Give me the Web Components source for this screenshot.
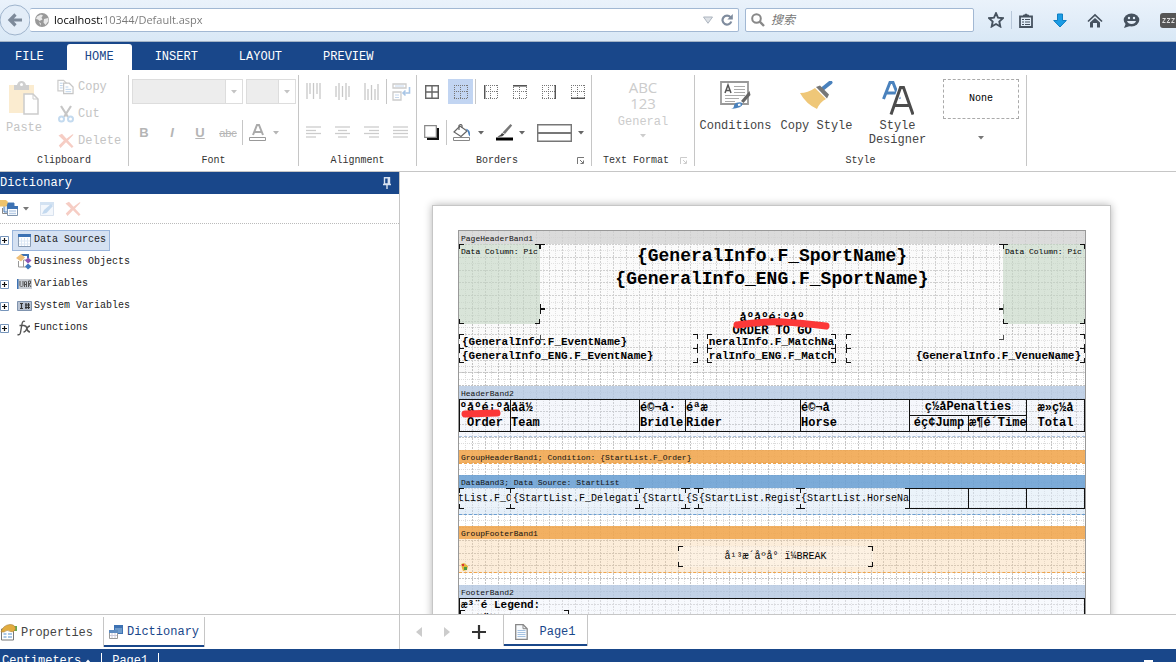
<!DOCTYPE html>
<html lang="en">
<head>
<meta charset="utf-8">
<title>Report Designer</title>
<style>
    html, body { margin: 0; height: 100%; }
    body {
        --blue: #19478a;
        --line: #c6c6c6;
        --ink: #444;
        --off: #c4c4c4;
        font-family: "Liberation Mono", monospace;
        font-size: 12px;
        line-height: 14px;
        color: var(--ink);
        background: #fff;
        overflow: hidden;
    }
</style>
</head>
<body>
<report-designer></report-designer>

<script>
const CONTROLS = `
    * { box-sizing: border-box; }
    button, input, select {
        font: inherit; color: inherit; background: none;
        border: 0; padding: 0; margin: 0; border-radius: 0; min-width: 0;
    }
    button { display: inline-flex; align-items: center; justify-content: center; flex: none; }
`;

function define(name, html, setup) {
    customElements.define(name, class extends HTMLElement {
        constructor() {
            super();
            this.shadow = this.attachShadow({ mode: 'open' });
        }

        connectedCallback() {
            const markup = typeof html === 'function' ? html(this) : html;
            this.shadow.innerHTML = `<style>${CONTROLS}</style>${markup}`;
            if (setup) setup(this);
        }
    });
}

// name: [width, height, svg content]
const bars = (list, vertical) => list.map(([p, a, b]) => vertical
    ? `<path d="M${p} ${a}V${b}"/>` : `<path d="M${a} ${p}H${b}"/>`).join('');
const dots = '<g stroke="#777" stroke-dasharray="1 1"><path d="M0 .5H14M0 6.5H14M0 13.5H14M.5 0V14M6.5 0V14M13.5 0V14"/></g>';
const vbars = list => `<g stroke="#c8c8c8" stroke-width="1.3">${bars(list, true)}</g>`;
const hbars = list => `<g stroke="#ccc" stroke-width="1.3">${bars(list, false)}</g>`;

const ICONS = {
    back: [32, 32, '<circle cx="15" cy="16" r="15" fill="#e3edf8" stroke="#9fb4cc"/><path d="M22 16H10M15.500 10.500L10 16l5.500 5.500" fill="none" stroke="#7d8a9a" stroke-width="3.200"/>'],
    globe: [14, 14, '<circle cx="7" cy="7" r="7" fill="#999"/><path d="M2 3.500L6 1.500l2 1-1.500 2 1 2L4.500 8 3 6.500l-2-.5zM9 6l4-1 .5 3-3 4-2-2.500zM4 9l2 1.500-.5 2z" fill="#e9e9e9"/>'],
    drop: [10, 8, '<path d="M.5 1h9L5 7.300z" fill="#dde1e6" stroke="#adb5bf"/>'],
    reload: [12, 12, '<path d="M9.500 3.200A4.500 4.500 0 1 0 10.300 7.500" fill="none" stroke="#7f8c9e" stroke-width="2.200"/><path d="M11.800 0v5.500H6.300z" fill="#7f8c9e"/>'],
    search: [14, 14, '<circle cx="5.500" cy="5.500" r="4.300" fill="none" stroke="#888" stroke-width="2"/><path d="M8.700 8.700L13 13" stroke="#888" stroke-width="2.400"/>'],
    star: [16, 16, '<path d="M8 1.200l2 4.500 5 .5-3.700 3.300 1 5L8 12l-4.300 2.500 1-5L1 6.200l5-.5z" fill="none" stroke="#46525f" stroke-width="1.900"/>'],
    list: [14, 15, '<path d="M1 3.500h12v10.500H1z" fill="none" stroke="#46525f" stroke-width="1.800"/><path d="M4.500 3V2h1.500L7 .8 8 2h1.500v1" fill="#46525f" stroke="#46525f"/><path d="M3 6.500h2M6 6.500h5M3 9h2M6 9h5M3 11.500h2M6 11.500h5" stroke="#46525f"/>'],
    download: [14, 15, '<path d="M4.500 1h5v6.500H13.300L7 14 .7 7.500h3.800z" fill="#1b9ce5" stroke="#0d7fc3"/>'],
    home: [16, 15, '<path d="M1 8.500L8 2l7 6.500" fill="none" stroke="#46525f" stroke-width="1.700"/><path d="M3 9.500l5-4.600 5 4.600v5H10v-4.500H6v4.500H3z" fill="#46525f"/>'],
    smile: [17, 15, '<ellipse cx="8.500" cy="7" rx="7.800" ry="6.500" fill="#46525f"/><path d="M3 10l-2 5 6-2z" fill="#46525f"/><circle cx="6" cy="5" r="1.200" fill="#e4eef9"/><circle cx="11" cy="5" r="1.200" fill="#e4eef9"/><path d="M4 8h9c-.8 4-8 4-9 0z" fill="#e4eef9"/>'],
    sleep: [16, 15, '<path d="M3 0h13v15H3a3 3 0 0 1-3-3V3a3 3 0 0 1 3-3z" fill="#555"/><path d="M2.500 5.500h3l-3 4h3M7 5.500h3l-3 4h3M11.500 5.500h3l-3 4h3" fill="none" stroke="#ddd"/>'],
    paste: [30, 34, '<path d="M0 4h25v28H0z" fill="#fbecd0"/><path d="M5 4h3q1-4 4.500-4T17 4h3v5H5z" fill="#cfcfcf"/><circle cx="12.500" cy="3.500" r="1.500" fill="#fff"/><path d="M15 13h9l5 5v15H15z" fill="#fff" stroke="#ccc" stroke-width="1.500"/><path d="M24 13v5h5" fill="none" stroke="#ccc"/>'],
    copy: [18, 16, '<path d="M1 1h6l3 3v8H1z" fill="#fff" stroke="#ccc" stroke-width="1.300"/><path d="M7 4h6l4 4v7H7z" fill="#fff" stroke="#c6c6c6" stroke-width="1.300"/><path d="M3 4h3M3 6.500h3M3 9h3M9 8h3M9 10.500h6M9 13h6" stroke="#b9d0ea"/>'],
    cut: [16, 18, '<path d="M3 1l7 11M13 1L6 12" stroke="#c6c6c6" stroke-width="2.200"/><circle cx="3.500" cy="14" r="2.500" fill="none" stroke="#c3daef" stroke-width="2"/><circle cx="12.500" cy="14" r="2.500" fill="none" stroke="#c3daef" stroke-width="2"/>'],
    cross: [16, 16, '<path d="M.5 2.500L4 .8l4.500 5 6-4.500 1 .4L10 7.500l5.500 6L13.800 15 8 9.300 2.500 15 .8 12.500l5-5z" fill="#f6cdc4"/>'],
    fontcolor: [18, 17, '<path d="M4 11L8 1h2l4 10M5.800 8h6.400" fill="none" stroke="#aaa" stroke-width="2"/><path d="M.5 13.500h16v3H.5z" fill="#fff" stroke="#999"/>'],
    caret: [6, 4, '<path d="M0 0h6L3 3.500z" fill="currentColor"/>'],
    vtop: [15, 18, vbars([[1, 0, 16], [4, 0, 11], [7.5, 0, 16], [11, 0, 11], [14, 0, 16]])],
    vmid: [15, 18, vbars([[1, 3, 14], [4, 0, 17], [7.5, 3, 14], [11, 0, 17], [14, 3, 14]])],
    vbot: [15, 18, vbars([[1, 0, 17], [4, 6, 17], [7.5, 2, 17], [11, 6, 17], [14, 1, 17]])],
    wrap: [19, 18, '<path d="M1 1h13v4H1zM1 9h8v8H1z" fill="#fff" stroke="#ccc" stroke-width="1.300"/><path d="M3 3h9M3 12h4M3 14.500h4" stroke="#c6d8ee"/><path d="M17.500 4v6H11M13.500 7.500L11 10l2.500 2.500" fill="none" stroke="#a9c6e6" stroke-width="1.600"/>'],
    left: [15, 14, hbars([[1, 0, 15], [4.5, 0, 10], [7.5, 0, 15], [11, 0, 10]])],
    center: [15, 14, hbars([[1, 0, 15], [4.5, 3, 12], [7.5, 0, 15], [11, 3, 12]])],
    right: [15, 14, hbars([[1, 0, 15], [4.5, 5, 15], [7.5, 0, 15], [11, 5, 15]])],
    justify: [15, 14, hbars([[1, 0, 15], [4.5, 0, 15], [7.5, 0, 15], [11, 0, 15]])],
    ball: [14, 14, '<path d="M.7.7h12.600v12.600H.7zM7 1v12M1 7h12" fill="none" stroke="#666" stroke-width="1.400"/>'],
    bnone: [14, 14, dots],
    bleft: [14, 14, dots + '<path d="M.7 0V14" stroke="#555" stroke-width="1.500"/>'],
    btop: [14, 14, dots + '<path d="M0 .8H14" stroke="#555" stroke-width="1.600"/>'],
    bright: [14, 14, dots + '<path d="M13.300 0V14" stroke="#555" stroke-width="1.500"/>'],
    bbottom: [14, 14, dots + '<path d="M0 13.300H14" stroke="#555" stroke-width="1.500"/>'],
    shadow: [15, 15, '<path d="M3 3h12v12H3z" fill="#111"/><path d="M.7.700h11.600v11.600H.7z" fill="#fff" stroke="#888" stroke-width="1.200"/>'],
    fill: [19, 17, '<path d="M1 8l6-6 7 5-6 5.500z" fill="#fff" stroke="#666" stroke-width="1.200"/><path d="M6 6V1.500q2-2 3 0V4" fill="none" stroke="#666" stroke-width="1.200"/><path d="M12.500 4.500q5.500 1 4.500 8-1.500-.5-2-4-.5-2-2.500-4z" fill="#4a82bd"/><path d="M.5 13.500h16v3H.5z" fill="#fff" stroke="#888"/>'],
    pen: [17, 17, '<path d="M14.500 0l1.700 1.500L9 10 6.500 8.500z" fill="#777"/><path d="M6 9l2.500 1.500Q6 13.500 1.500 12.500 4.500 12 6 9z" fill="#444"/><path d="M0 13.500h17v3H0z" fill="#000"/>'],
    border: [35, 18, '<path d="M.7.7h33.600v16.600H.7z" fill="#fff" stroke="#777" stroke-width="1.400"/><path d="M1 9h33" stroke="#777" stroke-width="2"/>'],
    launcher: [8, 8, '<path d="M.5 7V.5H7M3 3l3 3M6.500 3.500v3h-3" fill="none" stroke="currentColor"/>'],
    conditions: [32, 30, '<path d="M1 1h27v22H1z" fill="#fff" stroke="#999" stroke-width="1.800"/><path d="M5 12L8 4l3 8M6 9.500h4" fill="none" stroke="#555" stroke-width="1.500"/><path d="M14 5.500h11M14 8.500h11M14 11.500h11M5 14.500h20M5 17.500h14M5 20.500h10" stroke="#aaa"/><path d="M29.500 10l1 4-7 8-2.500-2z" fill="#666"/><path d="M18 21.500q4-1 4.500 1.500 0 4-11.500 5 3-1 3-3.500 1-3 4-3z" fill="#4a82bd"/><path d="M18 24l2.500-.5" stroke="#fff" stroke-width="2"/>'],
    brush: [34, 28, '<path d="M23 7.500L30.500 1.500" stroke="#4a82bd" stroke-width="4" stroke-linecap="round"/><path d="M16 6l4-1.500 9 9-2 4z" fill="#777"/><path d="M0 12q8 0 15-5l11 11q-6 3-9 10Q6 23 0 12z" fill="#efc778"/>'],
    style: [32, 34, '<path d="M1.500 18L8 1.500h3L17.500 18M4 12h10" fill="none" stroke="#4a82bd" stroke-width="3"/><path d="M9 33.500L18.500 6.500h3L31 33.500M12 24.500h16" fill="none" stroke="#fff" stroke-width="5"/><path d="M9 33.500L18.500 6.500h3L31 33.500M12 24.500h16" fill="none" stroke="#4c4c4c" stroke-width="3"/>'],
    pin: [8, 12, '<path d="M1.500.7h5V7h-5zM0 7.500h8M4 7.500V12M5.300 1v6" fill="none" stroke="#d8e2f0" stroke-width="1.400"/>'],
    newitem: [18, 17, '<path d="M4 3h10v9H4z" fill="#dbe7f4" stroke="#4a7ebb"/><path d="M4 3h10v3H4z" fill="#3d72b3"/><path d="M2.500 8v5.500H7" fill="none" stroke="#888"/><path d="M7.500 6.500h10v9h-10z" fill="#fff" stroke="#7d93ad"/><path d="M7 6h11v3H7z" fill="#3d72b3"/><path d="M9 11h7M9 13.500h7" stroke="#b9cde6" stroke-width="1.500"/><path d="M0 0h6l2 2-1.500 4.500H0z" fill="#efc36b"/>'],
    edit: [14, 14, '<path d="M.5.500h13v13H.5z" fill="#f3f7fc" stroke="#d9e2ee"/><path d="M0 0h14v3H0z" fill="#d3e2f2"/><path d="M2 12l2-4 7-6 2 2-6.500 7z" fill="#c3d9ef"/>'],
    plus: [9, 9, '<path d="M.5.500h8v8h-8z" fill="#fff" stroke="#7695bb"/><path d="M2 4.500h5M4.500 2v5" stroke="#111" stroke-width="1.200"/>'],
    table: [13, 13, '<path d="M.5.500h12v12H.5z" fill="#fff" stroke="#8a9db5"/><path d="M0 0h13v3H0z" fill="#3d72b3"/><path d="M1 7h11M1 10h11M3.500 4v8M6.500 4v8M9.500 4v8" stroke="#dbe7f4"/>'],
    objects: [16, 16, '<path d="M5 1h8M12 1v3" stroke="#3d72b3" stroke-width="2"/><path d="M2.500 7v6H10M7.500 13V6H10" fill="none" stroke="#999"/><path d="M5 0l4 3.500-4 4L0 4z" fill="#efc07a"/><path d="M12 3.500l3.500 3-3.500 3L9 6.500z" fill="#8c55b5"/><path d="M12 9.500l3.500 3-3.500 3-3-3z" fill="#3d78bd"/>'],
    vars: [15, 10, '<path d="M0 0h15v10H0z" fill="#c8ccd2"/><path d="M0 0h1.500v10H0z" fill="#3d72b3"/><path d="M3 2v4.500L4.500 8 6 6.500V2M7.500 8V3l1-1 1 1v5M7.500 5.500h2M11.500 8V2h2v2.500h-2L14 8" fill="none" stroke="#555"/>'],
    sysvars: [15, 10, '<path d="M.5.500h14v9H.5z" fill="#b9c3d2" stroke="#7f93ae"/><path d="M3 2.500h3M4.500 2.500v5M3 7.500h3M9 2v6M11.500 2v6M8 4h5M8 6.500h5" stroke="#333" stroke-width="1.200"/>'],
    fx: [14, 16, '<path d="M8 1.500Q5.500 0 4.800 5L3.500 12.500Q3 15.500.5 14.500M2.500 5.500h5" fill="none" stroke="#555" stroke-width="1.400"/><path d="M7 6q2-1 2.800 2.500T13 12M13 6q-2 0-3.300 3T6.500 12" fill="none" stroke="#555" stroke-width="1.400"/>'],
    props: [17, 17, '<path d="M1.500 5h12v11h-12z" fill="#fff" stroke="#777"/><path d="M3.500 10h3M8 10h4M3.500 13h3M8 13h4" stroke="#a9c8e8" stroke-width="2"/><path d="M12 2h5v5h-4z" fill="#67a84f"/><path d="M1 8Q3 1 10 .500q5 0 5.500 4-1 4-5 3Q7 5 4 8z" fill="#e2ac3f" stroke="#a8813a" stroke-width=".6"/>'],
    dict: [14, 14, '<path d="M5 0h9v9H5z" fill="#3d72b3"/><path d="M6 3h7v5H6z" fill="#6f9bcb"/><path d="M.5 5.500h8v8h-8z" fill="#fff" stroke="#999"/><path d="M0 5h9v3H0z" fill="#5d8bc0"/><path d="M3 8v5M6 8v5M1 10.500h7" stroke="#ccd"/>'],
    prev: [6, 10, '<path d="M6 0v10L0 5z" fill="#ccc"/>'],
    next: [6, 10, '<path d="M0 0v10l6-5z" fill="#ccc"/>'],
    add: [14, 14, '<path d="M0 7h14M7 0v14" stroke="#333" stroke-width="2.200"/>'],
    page: [13, 16, '<path d="M.7.700h7.500l4 4v10.600H.7z" fill="#f7fafd" stroke="#888" stroke-width="1.300"/><path d="M8 .700v4h4" fill="none" stroke="#888"/><path d="M2.500 6.500h8M2.500 8.500h8M2.500 10.500h8M2.500 12.500h8" stroke="#a4c2e2"/>'],
    cond: [7, 8, '<path d="M0 1l3-1 4 3-1 4-4 1-1-3z" fill="#e3b23c"/><path d="M1 1h2v2H1z" fill="#d33"/><path d="M3 4h3v3H3z" fill="#4f9a3d"/>'],
};

define('ui-icon', el => {
    const [w, h, body] = ICONS[el.getAttribute('name')];
    return `<style>:host { display: inline-flex; flex: none; } svg { display: block; }</style>
        <svg width="${w}" height="${h}" viewBox="0 0 ${w} ${h}" aria-hidden="true">${body}</svg>`;
});

define('browser-bar', `
    <style>
        :host {
            display: flex; align-items: center; height: 42px; box-sizing: border-box;
            padding-bottom: 1px; border-bottom: 1px solid #a3b3c6;
            background: linear-gradient(#eaf2fb, #d9e8f6);
            font: 12px/16px "Open Sans", "Noto Sans CJK SC", sans-serif; color: #777;
        }
        .field {
            display: flex; align-items: center; height: 24px; background: #fff;
            border: 1px solid #a2b8d3; border-radius: 2px; padding: 0 5px;
        }
        .url { flex: 1; gap: 5px; margin: 0 6px 0 -2px; border-left: 0; }
        .url input {
            flex: 1; font-size: 11px;
            background: linear-gradient(90deg, #000 49px, #777 49px);
            background-clip: text; -webkit-background-clip: text;
            -webkit-text-fill-color: transparent;
        }
        .url button { margin-left: 3px; }
        .find { width: 229px; gap: 6px; }
        .find input { flex: 1; }
        .find input::placeholder { font-style: italic; color: #777; opacity: 1; }
        nav { display: flex; align-items: center; margin-left: 14px; gap: 20px; }
        nav .sep { width: 1px; height: 18px; background: #b8c8da; margin: 0 -13px; }
    </style>
    <button aria-label="Back"><ui-icon name="back"></ui-icon></button>
    <div class="field url">
        <ui-icon name="globe"></ui-icon>
        <input aria-label="Address" value="localhost:10344/Default.aspx">
        <button aria-label="History"><ui-icon name="drop"></ui-icon></button>
        <button aria-label="Reload"><ui-icon name="reload"></ui-icon></button>
    </div>
    <div class="field find">
        <ui-icon name="search"></ui-icon>
        <input aria-label="Search" placeholder="搜索">
    </div>
    <nav>
        <button aria-label="Bookmark"><ui-icon name="star"></ui-icon></button>
        <span class="sep"></span>
        <button aria-label="Bookmarks list"><ui-icon name="list"></ui-icon></button>
        <button aria-label="Downloads"><ui-icon name="download"></ui-icon></button>
        <button aria-label="Home"><ui-icon name="home"></ui-icon></button>
        <button aria-label="Chat"><ui-icon name="smile"></ui-icon></button>
        <button aria-label="Sleep"><ui-icon name="sleep"></ui-icon></button>
    </nav>`);

define('ribbon-tabs', `
    <style>
        :host { display: flex; align-items: flex-end; height: 28px; background: var(--blue); color: #fff; }
        button { height: 26px; padding: 0 17px; margin-right: 7px; }
        .file { padding: 0 15px; margin-right: 8px; }
        .on { padding: 0 18px; margin-right: 6px; background: #fff; color: var(--blue); border-radius: 3px 3px 0 0; }
    </style>
    <button class="file">FILE</button><button class="on">HOME</button><button>INSERT</button>
    <button>LAYOUT</button><button>PREVIEW</button>`);

define('ribbon-group', el => `
    <style>
        :host {
            display: flex; flex-direction: column; flex: none; box-sizing: border-box;
            border-right: 1px solid var(--line);
        }
        .body { flex: 1; }
        footer { display: flex; font-size: 10px; line-height: 10px; height: 10px; color: #333; }
        .name { flex: 1; text-align: center; }
        .launch { margin-right: 6px; color: #777; }
        :host([disabled]) .launch { color: #ccc; }
    </style>
    <div class="body"><slot></slot></div>
    <footer><span class="name">${el.getAttribute('label')}</span>
    ${el.hasAttribute('launcher') ? '<button class="launch" aria-label="More"><ui-icon name="launcher"></ui-icon></button>' : ''}
    </footer>`);

const tools = (names) => names.map(n => n === '|' ? '<i class="sep"></i>'
    : `<button class="tool${n === 'bnone' ? ' on' : ''}" aria-label="${n}"><ui-icon name="${n}"></ui-icon></button>`).join('');

define('ribbon-bar', `
    <style>
        :host {
            display: flex; height: 102px; box-sizing: border-box; padding: 5px 0;
            border-bottom: 1px solid var(--line);
        }
        .row { display: flex; align-items: center; }
        .tall { flex-direction: column; justify-content: flex-start; text-align: center; }
        .off { color: var(--off); }
        .tool { width: 29px; height: 25px; }
        .tool.on { background: #c2d5f2; width: 25px; margin: 0 2px; }
        .sep { width: 1px; height: 25px; background: var(--line); flex: none; }
        .row + .row { margin-top: 16px; }
        .two { padding-top: 4px; }

        .clip { display: flex; }
        .clip .tall { width: 48px; padding-top: 6px; gap: 6px; }
        .edit { display: flex; flex-direction: column; padding-left: 9px; }
        .edit button { height: 27px; justify-content: flex-start; gap: 4px; }
        .edit button:first-child { height: 23px; margin-bottom: 2px; }
        .edit ui-icon { width: 17px; justify-content: center; }

        .combo { display: flex; height: 25px; border: 1px solid #ddd; margin-left: 3px; }
        select { appearance: none; flex: 1; background: #ededed; }
        .combo span { display: flex; width: 17px; align-items: center; justify-content: center; border-left: 1px solid #ddd; }
        .face { width: 111px; }
        .size { width: 50px; }
        .letters { padding-left: 1px; font-family: "Liberation Sans", sans-serif; font-size: 13px; font-weight: bold; color: #b5b5b5; }
        .letters .tool { width: 28px; }
        .letters .struck { font-size: 11px; font-weight: normal; text-decoration: line-through; }
        .letters .sep { margin-right: 6px; }
        .letters button { gap: 6px; }

        .drop { gap: 6px; height: 25px; margin-left: 6px; color: #666; }
        .pen { margin-left: 12px; }
        .format { display: block; width: 100%; padding-top: 4px; color: #ccc; }
        .big { font: 15px/16px "Open Sans", sans-serif; display: block; }
        .format .big + span { display: block; margin: 4px 0 5px; }
        .format ui-icon { display: flex; justify-content: center; }

        .styles { display: flex; }
        .styles .tall { width: 81px; padding-top: 6px; }
        .styles .tall ui-icon { height: 38px; }
        .styles .tall span { margin: 0 -2px; }
        .pick { display: flex; flex-direction: column; align-items: center; padding: 4px 0 0 5px; color: #777; gap: 17px; }
        .none { width: 76px; height: 40px; border: 1px dashed #aaa; color: #000; font-size: 10px; }
    </style>
    <ribbon-group label="Clipboard" style="width: 129px">
        <div class="clip off">
            <button class="tall"><ui-icon name="paste"></ui-icon>Paste</button>
            <div class="edit">
                <button><ui-icon name="copy"></ui-icon>Copy</button>
                <button><ui-icon name="cut"></ui-icon>Cut</button>
                <button><ui-icon name="cross"></ui-icon>Delete</button>
            </div>
        </div>
    </ribbon-group>
    <ribbon-group label="Font" style="width: 170px">
        <div class="two">
            <div class="row off">
                <div class="combo face"><select aria-label="Font"></select><span><ui-icon name="caret"></ui-icon></span></div>
                <div class="combo size"><select aria-label="Size"></select><span><ui-icon name="caret"></ui-icon></span></div>
            </div>
            <div class="row letters">
                <button class="tool">B</button><button class="tool"><em>I</em></button>
                <button class="tool"><u>U</u></button><button class="tool struck">abc</button>
                <i class="sep"></i>
                <button aria-label="Text color"><ui-icon name="fontcolor"></ui-icon><ui-icon name="caret"></ui-icon></button>
            </div>
        </div>
    </ribbon-group>
    <ribbon-group label="Alignment" style="width: 118px">
        <div class="two">
            <div class="row">${tools(['vtop', 'vmid', 'vbot', '|', 'wrap'])}</div>
            <div class="row">${tools(['left', 'center', 'right', 'justify'])}</div>
        </div>
    </ribbon-group>
    <ribbon-group label="Borders" launcher style="width: 175px">
        <div class="two">
            <div class="row">${tools(['ball', 'bnone', '|', 'bleft', 'btop', 'bright', 'bbottom'])}</div>
            <div class="row">${tools(['shadow', '|'])}
                <button class="drop" aria-label="Fill"><ui-icon name="fill"></ui-icon><ui-icon name="caret"></ui-icon></button>
                <button class="drop pen" aria-label="Line color"><ui-icon name="pen"></ui-icon><ui-icon name="caret"></ui-icon></button>
                <button class="drop pen" aria-label="Line style"><ui-icon name="border"></ui-icon><ui-icon name="caret"></ui-icon></button>
            </div>
        </div>
    </ribbon-group>
    <ribbon-group label="Text Format" launcher disabled style="width: 103px">
        <button class="format"><span class="big">ABC<br>123</span><span>General</span><ui-icon name="caret"></ui-icon></button>
    </ribbon-group>
    <ribbon-group label="Style" style="width: 332px">
        <div class="styles">
            <button class="tall"><ui-icon name="conditions"></ui-icon><span>Conditions</span></button>
            <button class="tall"><ui-icon name="brush"></ui-icon><span>Copy Style</span></button>
            <button class="tall"><ui-icon name="style"></ui-icon><span>Style<br>Designer</span></button>
            <div class="pick"><button class="none">None</button><button aria-label="More styles"><ui-icon name="caret"></ui-icon></button></div>
        </div>
    </ribbon-group>`);

define('tree-node', el => `
    <style>
        :host { display: flex; align-items: center; height: 22px; font-size: 10px; color: #222; }
        .toggle { width: 9px; height: 22px; margin-right: 3px; }
        .label { height: 21px; padding: 0 3px; gap: 2px; border: 1px solid transparent; }
        .label ui-icon { width: 16px; justify-content: center; }
        :host([selected]) .label { background: #d5e1f2; border-color: #9bb6dc; }
    </style>
    <button class="toggle" aria-label="Expand">${el.hasAttribute('leaf') ? '' : '<ui-icon name="plus"></ui-icon>'}</button>
    <button class="label"><ui-icon name="${el.getAttribute('icon')}"></ui-icon><slot></slot></button>`);

define('dictionary-panel', `
    <style>
        :host { display: flex; flex-direction: column; }
        header {
            display: flex; align-items: center; justify-content: space-between;
            height: 22px; padding-right: 8px; background: var(--blue); color: #fff;
        }
        .tools { display: flex; align-items: center; height: 30px; border-bottom: 1px dotted #bbb; }
        .tools button { margin-right: 11px; gap: 5px; color: #777; }
        .tree { padding-top: 5px; }
    </style>
    <header><span>Dictionary</span><button aria-label="Pin"><ui-icon name="pin"></ui-icon></button></header>
    <div class="tools">
        <button aria-label="New item"><ui-icon name="newitem"></ui-icon><ui-icon name="caret"></ui-icon></button>
        <button aria-label="Edit"><ui-icon name="edit"></ui-icon></button>
        <button aria-label="Delete"><ui-icon name="cross"></ui-icon></button>
    </div>
    <div class="tree">
        <tree-node icon="table" selected>Data Sources</tree-node>
        <tree-node icon="objects" leaf>Business Objects</tree-node>
        <tree-node icon="vars">Variables</tree-node>
        <tree-node icon="sysvars">System Variables</tree-node>
        <tree-node icon="fx">Functions</tree-node>
    </div>`);

// dotted layout grid behind the bands
define('design-grid', `
    <style>:host { display: block; } svg { display: block; width: 100%; height: 100%; }</style>
    <svg></svg>`, el => {
    const svg = el.shadow.querySelector('svg');
    const { clientWidth: width, clientHeight: height } = el;
    const step = 6.43;
    const draw = (d, i) => {
        const path = document.createElementNS('http://www.w3.org/2000/svg', 'path');
        path.setAttribute('d', d);
        path.setAttribute('stroke', i % 2 ? '#dcdcdc' : '#c4c4c4');
        path.setAttribute('stroke-dasharray', i % 2 ? '1 1' : '2 1');
        svg.appendChild(path);
    };
    for (let i = 1; i * step < width; i++) draw(`M${Math.round(i * step) + 0.5} 0V${height}`, i);
    for (let i = 1; i * step < height; i++) draw(`M0 ${Math.round(i * step) + 0.5}H${width}`, i);
});

define('report-band', el => `
    <style>
        :host { display: block; margin-bottom: 13px; }
        h3 {
            margin: 0; padding: 2px 2px 0; height: 13px; overflow: hidden;
            font-size: 8px; line-height: 12px; font-weight: normal; color: #111; white-space: pre;
            background: var(--head);
        }
        .body { position: relative; box-sizing: border-box; height: var(--h); background: var(--fill); border-bottom: 1px dashed var(--edge); }
    </style>
    <h3>${el.getAttribute('name')}</h3>
    <div class="body"><slot></slot></div>`);

define('report-item', `
    <style>
        :host {
            --c: linear-gradient(#111, #111);
            position: absolute; box-sizing: border-box;
            display: flex; align-items: center; justify-content: center;
            overflow: hidden; white-space: pre; text-align: center; color: #000;
            background:
                var(--c) 0 0 / 5px 1px, var(--c) 0 0 / 1px 5px,
                var(--c) 100% 0 / 5px 1px, var(--c) 100% 0 / 1px 5px,
                var(--c) 0 100% / 5px 1px, var(--c) 0 100% / 1px 5px,
                var(--c) 100% 100% / 5px 1px, var(--c) 100% 100% / 1px 5px,
                linear-gradient(#ffffff40, #ffffff40);
            background-repeat: no-repeat;
        }
        :host([align=left]) { justify-content: flex-start; padding-left: 3px; }
        :host([align=right]) { justify-content: flex-end; padding-right: 4px; }
        :host([kind=data]) { justify-content: flex-start; padding-left: 1px; }
        :host([kind=image]) {
            align-items: flex-start; justify-content: flex-start; padding: 2px 0 0 2px;
            font-size: 8px; line-height: 11px; background-color: #a9c3a890;
        }
        :host([kind=caption]) { font-weight: bold; font-size: 12px; line-height: 13px; }
        :host([kind=field]) { font-weight: bold; font-size: 11px; line-height: 15px; padding-top: 1px; }
        :host([kind=cell]) { border: 1px solid #111; background: #ffffff40; }
        :host([kind=title]) { align-items: flex-start; font-size: 18px; line-height: 23px; padding-top: 1px; font-weight: bold; }
        :host([kind=legend]) {
            border: 1px solid #111; background: #ffffff40; align-items: flex-start; justify-content: flex-start;
            padding-left: 1px; font-weight: bold; font-size: 11px; line-height: 12px;
        }
    </style>
    <slot></slot>`);

define('report-page', `
    <style>
        :host {
            display: block; position: relative; box-sizing: border-box; width: 679px;
            padding: 24px 24px 0 25px; background: #fff; color: #000;
            border: 1px solid var(--line); box-shadow: 0 0 8px #0000004d; font-size: 10px;
        }
        .sheet { position: relative; border: 1px solid #999; border-bottom: 0; height: 600px; }
        design-grid { position: absolute; inset: 0; }
        .bands { position: relative; }
        .marks { position: absolute; left: 0; top: 0; pointer-events: none; }
        .grey { --head: #d3d3d3d0; --fill: #00000005; --edge: #ccc; --h: 129px; }
        .pale { --head: #b4c8e2d0; --fill: #dfe7f550; --edge: #a9c0dd; --h: 38px; }
        .orange { --head: #f0a54ce0; --fill: #f8cf9c60; --edge: #f0a54c; }
        .blue { --head: #6a9fd3e0; --fill: #b9d4ee60; --edge: #6a9fd3; --h: 27px; }
        .order { --h: 0px; --fill: none; margin-bottom: 11px; }
        .start { margin-bottom: 11px; }
        .break { --h: 34px; margin-bottom: 12px; }
        .cond { position: absolute; left: 2px; bottom: 1px; }
        table { width: 100%; border-collapse: collapse; table-layout: fixed; font-size: 12px; line-height: 15px; font-weight: bold; }
        td { border: 1px solid #111; padding: 0; white-space: pre; overflow: hidden; }
        .c { text-align: center; }
        .clip { display: flex; justify-content: center; }
    </style>
    <div class="sheet">
        <design-grid></design-grid>
        <div class="bands">
            <report-band class="grey" name="PageHeaderBand1">
                <report-item kind="image" style="left:0;top:0;width:81px;height:80px">Data Column: Pic</report-item>
                <report-item kind="title" style="left:81px;top:0;width:464px;height:65px">{GeneralInfo.F_SportName}
{GeneralInfo_ENG.F_SportName}</report-item>
                <report-item kind="caption" style="left:81px;top:65px;width:464px;height:31px">åºåºé¡ºåº
ORDER TO GO</report-item>
                <report-item kind="image" style="left:544px;top:0;width:82px;height:80px">Data Column: Pic</report-item>
                <report-item kind="field" align="left" style="left:0;top:90px;width:239px;height:15px">{GeneralInfo.F_EventName}</report-item>
                <report-item kind="field" style="left:248px;top:90px;width:129px;height:15px">neralInfo.F_MatchNa</report-item>
                <report-item style="left:387px;top:90px;width:239px;height:15px"></report-item>
                <report-item kind="field" align="left" style="left:0;top:104px;width:239px;height:15px">{GeneralInfo_ENG.F_EventName}</report-item>
                <report-item kind="field" style="left:248px;top:104px;width:129px;height:15px">ralInfo_ENG.F_Match</report-item>
                <report-item kind="field" align="right" style="left:387px;top:104px;width:239px;height:15px">{GeneralInfo.F_VenueName}</report-item>
            </report-band>
            <report-band class="pale" name="HeaderBand2">
                <table>
                    <colgroup><col style="width:51px"><col style="width:129px"><col style="width:46px"><col style="width:115px"><col style="width:109px"><col style="width:59px"><col style="width:58px"><col></colgroup>
                    <tr>
                        <td rowspan="2" class="c"><div class="clip">ºåºé¡ºå</div>Order</td>
                        <td rowspan="2">åä½<br>Team</td>
                        <td rowspan="2">é©¬å·<br>Bridle</td>
                        <td rowspan="2">éªæ<br>Rider</td>
                        <td rowspan="2">é©¬å<br>Horse</td>
                        <td colspan="2" class="c">ç½åPenalties</td>
                        <td rowspan="2" class="c">æ»ç½å<br>Total</td>
                    </tr>
                    <tr><td class="c">éç¢Jump</td><td class="c">æ¶é´Time</td></tr>
                </table>
            </report-band>
            <report-band class="orange order" name="GroupHeaderBand1; Condition: {StartList.F_Order}"></report-band>
            <report-band class="blue start" name="DataBand3; Data Source: StartList">
                <report-item style="left:0;top:0;width:52px;height:21px">tList.F_O</report-item>
                <report-item align="left" style="left:51px;top:0;width:130px;height:21px">{StartList.F_Delegati</report-item>
                <report-item align="left" style="left:180px;top:0;width:47px;height:21px">{StartL</report-item>
                <report-item style="left:226px;top:0;width:14px;height:21px">{S</report-item>
                <report-item kind="data" style="left:239px;top:0;width:103px;height:21px">{StartList.Regist</report-item>
                <report-item kind="data" style="left:341px;top:0;width:110px;height:21px">{StartList.HorseNa</report-item>
                <report-item kind="cell" style="left:450px;top:0;width:60px;height:21px"></report-item>
                <report-item kind="cell" style="left:509px;top:0;width:59px;height:21px"></report-item>
                <report-item kind="cell" style="left:567px;top:0;width:59px;height:21px"></report-item>
            </report-band>
            <report-band class="orange break" name="GroupFooterBand1">
                <report-item style="left:219px;top:7px;width:195px;height:21px">å¹³æ´åºå° ï¼BREAK</report-item>
                <ui-icon class="cond" name="cond"></ui-icon>
            </report-band>
            <report-band class="pale" name="FooterBand2">
                <report-item kind="legend" style="left:0;top:0;width:626px;height:60px">æ³¨é Legend:</report-item>
                <report-item kind="field" align="left" style="left:1px;top:12px;width:109px;height:15px">æ ½ï¼ æ</report-item>
            </report-band>
        </div>
    </div>
    <svg class="marks" width="679" height="240" fill="none" stroke="#fc3838" stroke-linecap="round" stroke-linejoin="round" stroke-width="7">
        <path d="M304 119Q332 115 350 116T393 120"/><path d="M32 208L64 207"/>
    </svg>`);

define('bottom-tabs', `
    <style>
        :host { display: flex; align-items: flex-start; height: 35px; box-sizing: border-box; border-top: 1px solid var(--line); }
        button { gap: 4px; }
        .side { display: flex; width: 400px; height: 34px; box-sizing: border-box; border-right: 1px solid var(--line); flex: none; }
        .side button { height: 31px; margin: 1px 10px 0 0; padding-top: 2px; }
        .side .on { padding: 0 5px; border: solid var(--line); border-width: 0 1px; box-shadow: inset 0 -2px var(--blue); color: var(--blue); margin-top: 2px; height: 30px; }
        .pages { display: flex; align-items: center; height: 31px; }
        .pages button { margin-left: 16px; padding-top: 2px; }
        .pages button + button { margin-left: 22px; }
        .pages .on { height: 31px; width: 85px; gap: 11px; padding-top: 3px; border: solid var(--line); border-width: 0 1px; box-shadow: inset 0 -2px var(--blue); color: var(--blue); }
        .pages button + .on { margin-left: 17px; }
    </style>
    <div class="side">
        <button><ui-icon name="props"></ui-icon>Properties</button>
        <button class="on"><ui-icon name="dict"></ui-icon>Dictionary</button>
    </div>
    <div class="pages">
        <button aria-label="Previous page"><ui-icon name="prev"></ui-icon></button>
        <button aria-label="Next page"><ui-icon name="next"></ui-icon></button>
        <button aria-label="Add page"><ui-icon name="add"></ui-icon></button>
        <button class="on"><ui-icon name="page"></ui-icon>Page1</button>
    </div>`);

define('status-bar', `
    <style>
        :host { display: flex; height: 13px; background: var(--blue); color: #fff; overflow: hidden; }
        button { height: 14px; margin-top: 4px; padding: 1px 10px 0; gap: 4px; border-right: 1px solid #fff; align-items: flex-start; }
        .units { padding-left: 2px; }
        .up { transform: rotate(180deg); margin-top: 5px; }
        .zoom { margin: 11px 23px 0 auto; width: 9px; height: 2px; background: #fff; }
    </style>
    <button class="units">Centimeters<ui-icon class="up" name="caret"></ui-icon></button>
    <button>Page1</button>
    <span class="zoom"></span>`);

define('report-designer', `
    <style>
        :host { display: flex; flex-direction: column; height: 100vh; overflow: hidden; }
        browser-bar, ribbon-tabs, ribbon-bar, bottom-tabs, status-bar { flex: none; }
        main { flex: 1; display: flex; min-height: 0; }
        dictionary-panel { flex: none; width: 400px; box-sizing: border-box; border-right: 1px solid var(--line); }
        .canvas { flex: 1; min-width: 0; overflow: hidden; padding: 33px 0 0 32px; }
    </style>
    <browser-bar></browser-bar>
    <ribbon-tabs></ribbon-tabs>
    <ribbon-bar></ribbon-bar>
    <main>
        <dictionary-panel></dictionary-panel>
        <div class="canvas"><report-page></report-page></div>
    </main>
    <bottom-tabs></bottom-tabs>
    <status-bar></status-bar>`);
</script>
</body>
</html>
